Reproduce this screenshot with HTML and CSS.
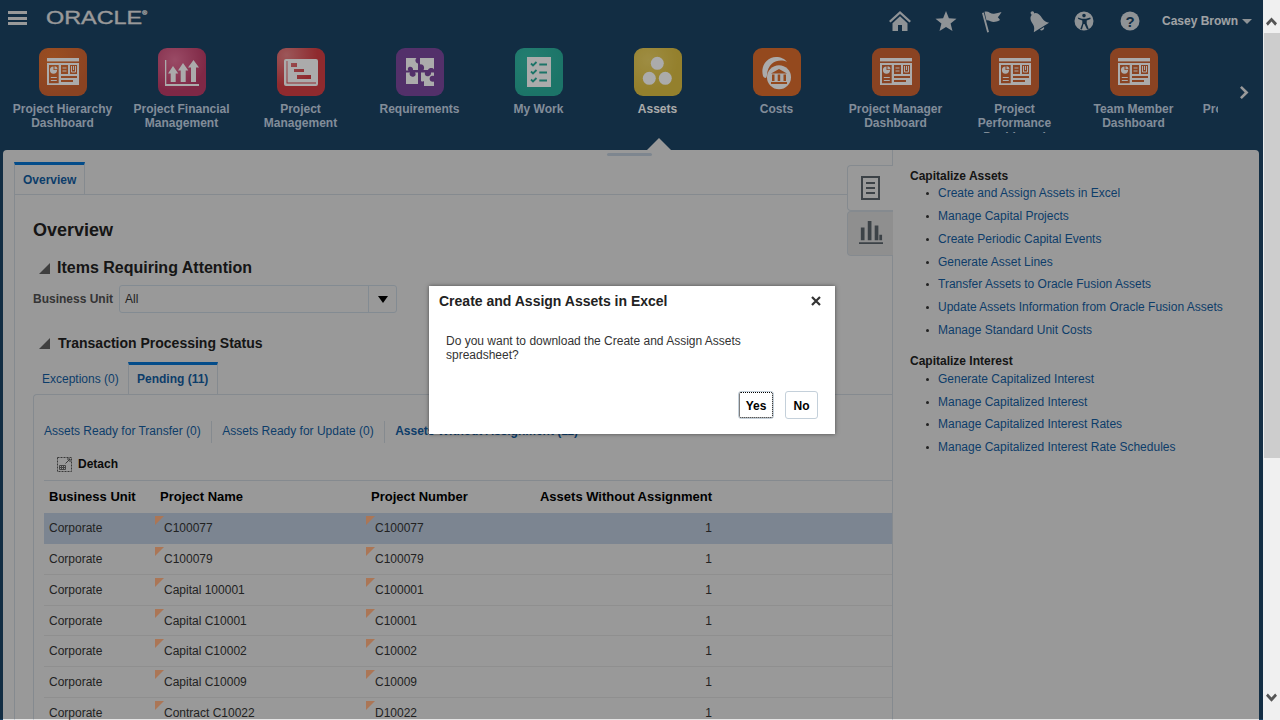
FILE: index.html
```html
<!DOCTYPE html>
<html lang="en">
<head>
  <meta charset="UTF-8">
  <title>Overview</title>
  <link rel="stylesheet" href="styles.css">
</head>
<body>

  <svg class="defs" width="0" height="0">
    <symbol id="i-dash" viewBox="0 0 48 48">
      <rect x="8" y="10" width="32" height="3.4" fill="#fff"/>
      <path fill="#fff" fill-rule="evenodd" d="M8 15H40V37H8Z M10 17V35.3H19.7V17Z M22 17V26H29V17Z M31 17V26H38V17Z M22 28V30H38V28Z M22 32V34H34V32Z"/>
      <path fill="#fff" d="M14.5 18.5a3.6 3.6 0 1 0 3.6 3.6H14.5Z M15.5 18.2v3h3a3.2 3.2 0 0 0-3-3Z"/>
      <path stroke="#fff" stroke-width="1" fill="none" d="M11.8 29.5H17.8 M11.8 32.5H17.8 M23.5 20H27.5 M23.5 23H27.5 M32.5 18V24H36.5V18 M34.5 18V22"/>
    </symbol>
  </svg>

  <div class="screen">
    <div class="page">

      <header class="topbar">
        <div class="hamburger"><span></span><span></span><span></span></div>
        <div class="logo">ORACLE<sup>®</sup></div>
        <div class="top-icons">
          <svg class="top-icon" viewBox="0 0 24 24"><path d="M12 2L1 12l1.6 1.6L12 5l9.4 8.6L23 12Z M4.5 14.2L12 7.2l7.5 7V22H14v-6h-4v6H4.5Z"/></svg>
          <svg class="top-icon" viewBox="0 0 24 24"><path d="M12 2l2.9 7.2 7.6.5-5.9 4.9 1.9 7.5L12 17.900l-6.500 4.200 1.900-7.500L1.500 9.700l7.600-.5Z"/></svg>
          <svg class="top-icon" viewBox="0 0 24 24"><path d="M2 4l1.800-.6L9 23l-1.800.5Z M4.500 2.800c4-1.500 6 2.500 9.500 2 2.500-.3 5-1 7.500-1.800-1.200 2-2 3.300-3.700 5.300 1 1 1.500 1.500 2.200 2.700-4 2.300-7 2.300-9.500 1.300-1.500-.6-3-1.300-4-.8Z"/></svg>
          <svg class="top-icon" viewBox="0 0 24 24"><g transform="rotate(-32 12 13)"><circle cx="12" cy="2.500" r="1.800"/><path d="M12 3.500C7 3.500 6.500 8 6.500 12c0 4-1.800 5.500-3.500 7.500H21c-1.700-2-3.500-3.500-3.500-7.500 0-4-.5-8.500-5.500-8.500Z M9.500 20.500a2.600 2.600 0 0 0 5 0Z"/></g></svg>
          <svg class="top-icon" viewBox="0 0 24 24"><path fill-rule="evenodd" d="M12 2.500a9.500 9.500 0 1 0 0 19 9.500 9.500 0 0 0 0-19Z M12 4.800a1.800 1.800 0 1 1 0 3.600 1.800 1.800 0 0 1 0-3.600Z M5.800 8.500L10 9.800h4l4.200-1.300.5 1.500-4 1.500v3l2 5.500-1.600.6L12.500 15h-1L9.900 20.600l-1.600-.6 2-5.500v-3l-4-1.500Z"/></svg>
          <svg class="top-icon" viewBox="0 0 24 24"><circle cx="12" cy="12" r="9.500"/><text class="help-mark" x="12" y="17.500" text-anchor="middle">?</text></svg>
        </div>
        <div class="user-name">Casey Brown</div>
        <div class="caret"></div>
      </header>

      <nav class="springboard">
        <div class="strip">
          <div class="tile">
            <div class="tile-icon ic-dash-first"><svg viewBox="0 0 48 48"><use href="#i-dash"/></svg></div>
            <div class="tile-label">Project Hierarchy Dashboard</div>
          </div>
          <div class="tile">
            <div class="tile-icon ic-finance">
              <svg viewBox="0 0 48 48" fill="#fff"><path d="M7 12H8.300V36H41V38H7Z M15 18l5.300 7.500H17.700V34H12.700V25.500H10Z M25 15l5.300 7.500H27.700V34H22.700V22.500H20Z M35.500 12l5.500 7.500H38V34H33V19.500H30Z"/></svg>
            </div>
            <div class="tile-label">Project Financial Management</div>
          </div>
          <div class="tile">
            <div class="tile-icon ic-pm">
              <svg viewBox="0 0 48 48" fill="#fff"><path fill-rule="evenodd" d="M9 11H39a2 2 0 0 1 2 2V36a2 2 0 0 1-2 2H9a2 2 0 0 1-2-2V13a2 2 0 0 1 2-2Z M9.500 13V35.500H39V34.500H10.500V13Z M14 15V19H20V15Z M17 21V24H27V21Z M20 27V31H34V27Z"/></svg>
            </div>
            <div class="tile-label">Project Management</div>
          </div>
          <div class="tile">
            <div class="tile-icon ic-req">
              <svg viewBox="0 0 48 48" fill="#fff"><path d="M10 10H20.500c-2 2 -1 5 1.500 5.500V22H17c.5-2.500-2-4-4-3-1.500.8-1.500 2.500-.5 3.500H10Z M24 10H38V21.500c-1-2-5-2-6 .5H27.500c2-3-1-6.500-3.500-5.500Z M10 24.500H14c-1.500 2.500 1.500 5 4 4 2-.8 2-3 1-4H22V36H10Z M25 24.500H29c-1 3 2 4.500 4 3.500 2-.8 2-2 2-3.500H38V28c-2.500-1-5 1-4.300 3.500.5 1.800 2.500 2.800 4.300 2V38H28V33c-1.500 1-3 .6-3-.5Z"/></svg>
            </div>
            <div class="tile-label">Requirements</div>
          </div>
          <div class="tile">
            <div class="tile-icon ic-work">
              <svg viewBox="0 0 48 48"><rect x="12" y="9" width="24" height="30" fill="#fff"/><path fill="none" stroke="#2aae9b" stroke-width="1.800" d="M16 15.500l2 2 3.500-3.500 M16 23.500l2 2 3.500-3.500 M16 31.500l2 2 3.500-3.500 M24.300 16.500H32 M24.300 24.500H32 M24.300 32.500H32"/></svg>
            </div>
            <div class="tile-label">My Work</div>
          </div>
          <div class="tile active">
            <div class="tile-icon ic-assets">
              <svg viewBox="0 0 48 48" fill="#fff"><circle cx="23.300" cy="15.300" r="6.500"/><circle cx="15.300" cy="30.300" r="6.500"/><circle cx="31.300" cy="30.300" r="6.500"/></svg>
            </div>
            <div class="tile-label">Assets</div>
          </div>
          <div class="tile">
            <div class="tile-icon ic-costs">
              <svg viewBox="0 0 48 48"><path fill="#fff" d="M10 28C7 17 15 9 23 9c5 0 9 2 11 5-7-3.500-19-1-20 13-.2 1.500-.5 2-1 3-1.500 0-2.500-1-3-2Z"/><circle cx="26" cy="29.300" r="12" fill="#fff"/><path fill="#dd6d2e" d="M26 21l8 4.500H18Z M19 26.500h2.500V33H19Z M24.700 26.500h2.500V33h-2.500Z M30.500 26.500H33V33h-2.500Z M18 34h16v2H18Z"/></svg>
            </div>
            <div class="tile-label">Costs</div>
          </div>
          <div class="tile">
            <div class="tile-icon ic-dash"><svg viewBox="0 0 48 48"><use href="#i-dash"/></svg></div>
            <div class="tile-label">Project Manager Dashboard</div>
          </div>
          <div class="tile">
            <div class="tile-icon ic-dash"><svg viewBox="0 0 48 48"><use href="#i-dash"/></svg></div>
            <div class="tile-label">Project Performance Dashboard</div>
          </div>
          <div class="tile">
            <div class="tile-icon ic-dash"><svg viewBox="0 0 48 48"><use href="#i-dash"/></svg></div>
            <div class="tile-label">Team Member Dashboard</div>
          </div>
          <div class="tile">
            <div class="tile-icon ic-dash"><svg viewBox="0 0 48 48"><use href="#i-dash"/></svg></div>
            <div class="tile-label">Project Hierarchy Dashboard</div>
          </div>
        </div>
        <svg class="strip-next" viewBox="0 0 10 13"><path d="M0 1.800L1.800 0 8.500 6.500 1.800 13 0 11.200 4.700 6.500Z"/></svg>
      </nav>

      <main class="panel">
        <div class="panel-pointer"></div>
        <div class="panel-handle"></div>

        <section class="work-area">
          <div class="tab-row">
            <div class="tab-main">Overview</div>
          </div>
          <div class="frame">
            <h1 class="title">Overview</h1>
            <h2 class="section-head"><span class="disclose"></span>Items Requiring Attention</h2>
            <div class="form-row">
              <label class="field-label">Business Unit</label>
              <div class="select">
                <span class="select-value">All</span>
                <span class="select-btn"><span class="select-arrow"></span></span>
              </div>
            </div>
            <h3 class="sub-head"><span class="disclose"></span>Transaction Processing Status</h3>

            <div class="subtabs">
              <div class="subtab">Exceptions (0)</div>
              <div class="subtab current">Pending (11)</div>
            </div>

            <div class="subpanel">
              <div class="filters">
                <a class="filter">Assets Ready for Transfer (0)</a>
                <a class="filter">Assets Ready for Update (0)</a>
                <a class="filter selected">Assets Without Assignment (11)</a>
              </div>
              <div class="toolbar">
                <svg class="detach-icon" viewBox="0 0 15 15">
                  <path fill="none" stroke="#555" stroke-dasharray="2 1" d="M.5.500h14v14H.500Z"/>
                  <path fill="none" stroke="#555" d="M8.500 6.500L13 2 M10 2h3v3"/>
                  <path fill="none" stroke="#666" d="M2.500 8.500h6v4h-6Z M2.500 10.500h6 M4.500 8.500v4 M6.500 8.500v4"/>
                </svg>
                <span>Detach</span>
              </div>
              <div class="grid-row grid-head">
                <div class="cell">Business Unit</div>
                <div class="cell">Project Name</div>
                <div class="cell">Project Number</div>
                <div class="cell num">Assets Without Assignment</div>
              </div>
              <div class="grid-row picked">
                <div class="cell">Corporate</div>
                <div class="cell linked">C100077</div>
                <div class="cell linked">C100077</div>
                <div class="cell num">1</div>
              </div>
              <div class="grid-row">
                <div class="cell">Corporate</div>
                <div class="cell linked">C100079</div>
                <div class="cell linked">C100079</div>
                <div class="cell num">1</div>
              </div>
              <div class="grid-row">
                <div class="cell">Corporate</div>
                <div class="cell linked">Capital 100001</div>
                <div class="cell linked">C100001</div>
                <div class="cell num">1</div>
              </div>
              <div class="grid-row">
                <div class="cell">Corporate</div>
                <div class="cell linked">Capital C10001</div>
                <div class="cell linked">C10001</div>
                <div class="cell num">1</div>
              </div>
              <div class="grid-row">
                <div class="cell">Corporate</div>
                <div class="cell linked">Capital C10002</div>
                <div class="cell linked">C10002</div>
                <div class="cell num">1</div>
              </div>
              <div class="grid-row">
                <div class="cell">Corporate</div>
                <div class="cell linked">Capital C10009</div>
                <div class="cell linked">C10009</div>
                <div class="cell num">1</div>
              </div>
              <div class="grid-row">
                <div class="cell">Corporate</div>
                <div class="cell linked">Contract C10022</div>
                <div class="cell linked">D10022</div>
                <div class="cell num">1</div>
              </div>
            </div>
          </div>
        </section>

        <div class="side-tabs">
          <div class="side-tab open">
            <svg viewBox="0 0 24 26" class="side-icon"><path fill="none" stroke="#5a636b" stroke-width="2" d="M3 2H20V24H3Z M7 8H16 M7 13H16 M7 18H16"/></svg>
          </div>
          <div class="side-tab">
            <svg viewBox="0 0 26 26" class="side-icon chart"><path fill="#5a636b" d="M2 8H6V22H2Z M9.500 1H13.500V22H9.500Z M17 6H21V22H17Z M22 16H25V22H22Z M0 24H26V26H0Z"/></svg>
          </div>
        </div>

        <aside class="tasks">
          <h4 class="task-head">Capitalize Assets</h4>
          <ul class="task-list">
            <li><a>Create and Assign Assets in Excel</a></li>
            <li><a>Manage Capital Projects</a></li>
            <li><a>Create Periodic Capital Events</a></li>
            <li><a>Generate Asset Lines</a></li>
            <li><a>Transfer Assets to Oracle Fusion Assets</a></li>
            <li><a>Update Assets Information from Oracle Fusion Assets</a></li>
            <li><a>Manage Standard Unit Costs</a></li>
          </ul>
          <h4 class="task-head second">Capitalize Interest</h4>
          <ul class="task-list tight">
            <li><a>Generate Capitalized Interest</a></li>
            <li><a>Manage Capitalized Interest</a></li>
            <li><a>Manage Capitalized Interest Rates</a></li>
            <li><a>Manage Capitalized Interest Rate Schedules</a></li>
          </ul>
        </aside>
      </main>

      <div class="overlay"></div>

      <div class="dialog">
        <div class="dialog-head">
          <span class="dialog-title">Create and Assign Assets in Excel</span>
          <svg class="dialog-close" viewBox="0 0 10 10"><path fill="none" stroke="#333" stroke-width="2.200" d="M1 1L9 9 M9 1L1 9"/></svg>
        </div>
        <p class="dialog-body">Do you want to download the Create and Assign Assets spreadsheet?</p>
        <div class="dialog-foot">
          <button class="btn focus">Yes</button>
          <button class="btn">No</button>
        </div>
      </div>
    </div>

    <div class="scrollbar">
      <div class="scroll-btn">
        <svg viewBox="0 0 12 9"><path d="M0 6.500L6 0l6 6.500L10 9 6 4.500 2 9Z"/></svg>
      </div>
      <div class="scroll-thumb"></div>
      <div class="scroll-track">
        <svg viewBox="0 0 12 9"><path d="M0 2.500L6 9l6-6.500L10 0 6 4.500 2 0Z"/></svg>
      </div>
    </div>
  </div>

</body>
</html>
```

FILE: styles.css
```css
* {
  box-sizing: border-box;
}
html, body {
  margin: 0;
  padding: 0;
  height: 720px;
  overflow: hidden;
}
body {
  font-family: "Liberation Sans", Arial, sans-serif;
  font-size: 12px;
  color: #333;
  background: #f0f0f0;
}
a {
  color: #145c9e;
}
.defs {
  position: absolute;
}
.screen {
  display: flex;
  height: 720px;
}
.page {
  position: relative;
  width: 1263px;
  height: 720px;
  background: #1b4365;
  overflow: hidden;
}

/* top bar */
.topbar {
  display: flex;
  align-items: center;
  height: 48px;
  padding: 0 11px 6px 8px;
}
.hamburger {
  display: flex;
  flex-direction: column;
  gap: 2.5px;
  width: 19px;
  margin-bottom: 6px;
}
.hamburger span {
  height: 3px;
  background: #e5e5e5;
}
.logo {
  width: 100px;
  margin-left: 19px;
  margin-bottom: 7px;
  font-size: 18px;
  line-height: 20px;
  color: #e5e5e5;
  transform: scaleX(1.3);
  transform-origin: left center;
  -webkit-text-stroke: 0.3px #e5e5e5;
}
.logo sup {
  font-size: 5px;
  vertical-align: 9px;
  line-height: 0;
}
.top-icons {
  display: flex;
  gap: 22px;
  margin-left: auto;
}
.top-icon {
  width: 24px;
  height: 24px;
  fill: #d5dbe0;
}
.help-mark {
  font-size: 15px;
  font-weight: bold;
  fill: #1b4365;
}
.user-name {
  margin-left: 20px;
  font-weight: bold;
  color: #eef2f6;
}
.caret {
  width: 0;
  height: 0;
  margin-left: 4px;
  border-left: 5px solid transparent;
  border-right: 5px solid transparent;
  border-top: 5px solid #d5dbe0;
}

/* springboard */
.springboard {
  display: flex;
  height: 102px;
  padding-left: 3px;
}
.strip {
  display: flex;
  flex: none;
  width: 1215px;
  overflow: hidden;
}
.tile {
  flex: none;
  display: flex;
  flex-direction: column;
  align-items: center;
  width: 119px;
}
.tile-icon {
  width: 48px;
  height: 48px;
  border-radius: 9px;
}
.tile-icon svg {
  display: block;
  width: 48px;
  height: 48px;
}
.tile-label {
  width: 105px;
  max-height: 31px;
  margin-top: 6px;
  overflow: hidden;
  font-weight: bold;
  line-height: 14px;
  text-align: center;
  color: #c2d2e3;
}
.tile.active .tile-label {
  color: #fff;
}
.ic-dash-first { background: radial-gradient(circle at 30% 20%, #e67532, #ce6434 75%); }
.ic-dash { background: #ce6434; }
.ic-finance { background: radial-gradient(circle at 35% 25%, #e67098, #be3d69 65%); }
.ic-pm { background: radial-gradient(circle at 20% 15%, #e88285, #d53f45 55%); }
.ic-req { background: #7d489e; }
.ic-work { background: radial-gradient(circle at 30% 25%, #36bca8, #2aae9b 70%); }
.ic-assets { background: radial-gradient(circle at 30% 25%, #ecd264, #ddbf43 60%); }
.ic-costs { background: #dd6d2e; }
.strip-next {
  width: 10px;
  height: 13px;
  margin: 38px 0 0 22px;
  fill: #e5e5e5;
}

/* main panel */
.panel {
  position: relative;
  display: flex;
  width: 1256px;
  height: 570px;
  margin-left: 3px;
  background: #e5e5e5;
  border-radius: 4px 4px 0 0;
}
.panel-pointer {
  position: absolute;
  left: 644px;
  top: -12px;
  width: 0;
  height: 0;
  border-left: 12px solid transparent;
  border-right: 12px solid transparent;
  border-bottom: 12px solid #e5e5e5;
}
.panel-handle {
  position: absolute;
  left: 604px;
  top: 3px;
  width: 45px;
  height: 3px;
  border-radius: 2px;
  background: #bcc8d6;
}
.work-area {
  flex: none;
  width: 889px;
  padding: 12px 0 0 11px;
  overflow: hidden;
}
.tab-row {
  height: 32px;
}
.tab-main {
  width: 71px;
  height: 32px;
  border: 1px solid #c6ced6;
  border-top: 3px solid #0572ce;
  border-bottom: none;
  padding: 8px 0 0 8px;
  font-weight: bold;
  line-height: 14px;
  color: #145c9e;
}
.frame {
  min-height: 526px;
  border-left: 1px solid #c6ced6;
  border-top: 1px solid #c6ced6;
  padding: 24px 0 0 18px;
}
.title {
  margin: 0;
  font-size: 18px;
  line-height: 22px;
  color: #222;
}
.section-head {
  display: flex;
  align-items: center;
  margin: 17px 0 0;
  font-size: 16px;
  line-height: 20px;
  color: #222;
}
.disclose {
  width: 0;
  height: 0;
  margin: 0 7px 0 6px;
  border-left: 11px solid transparent;
  border-bottom: 11px solid #5f5f5f;
}
.form-row {
  display: flex;
  align-items: center;
  margin-top: 7px;
}
.field-label {
  width: 86px;
  font-weight: bold;
  color: #4f4f4f;
}
.select {
  display: flex;
  width: 278px;
  height: 28px;
  border: 1px solid #c4d0da;
  border-radius: 3px;
}
.select-value {
  flex: 1;
  padding-left: 5px;
  line-height: 26px;
}
.select-btn {
  display: flex;
  align-items: center;
  justify-content: center;
  width: 28px;
  border-left: 1px solid #c4d0da;
}
.select-arrow {
  width: 0;
  height: 0;
  border-left: 5px solid transparent;
  border-right: 5px solid transparent;
  border-top: 7px solid #000;
}
.sub-head {
  display: flex;
  align-items: center;
  margin: 21px 0 0;
  font-size: 14px;
  line-height: 18px;
  color: #222;
}
.sub-head .disclose {
  margin-right: 8px;
}
.subtabs {
  display: flex;
  margin-top: 10px;
  height: 32px;
}
.subtab {
  width: 95px;
  padding: 10px 0 0 9px;
  line-height: 14px;
  color: #145c9e;
}
.subtab.current {
  width: 90px;
  border: 1px solid #c6ced6;
  border-top: 3px solid #0572ce;
  border-bottom: none;
  padding: 7px 0 0 8px;
  font-weight: bold;
}
.subpanel {
  min-height: 340px;
  border-left: 1px solid #c6ced6;
  border-top: 1px solid #c6ced6;
  border-radius: 4px 0 0 0;
  padding: 26px 0 0 10px;
}
.filters {
  display: flex;
  height: 22px;
}
.filter {
  padding-right: 10px;
  margin-right: 10.5px;
  border-right: 1px solid #c6ced6;
  line-height: 20px;
}
.filter.selected {
  border: none;
  font-weight: bold;
}
.toolbar {
  display: flex;
  align-items: center;
  height: 22px;
  margin-top: 10px;
  margin-bottom: 5px;
  padding-left: 13px;
  font-weight: bold;
  color: #111;
}
.detach-icon {
  width: 15px;
  height: 15px;
  margin-right: 6px;
}
.grid-row {
  display: grid;
  grid-template-columns: 111px 211px 168px 183px 1fr;
  height: 30.85px;
  border-bottom: 1px solid #d6d6d6;
  line-height: 30px;
  color: #333;
}
.grid-head {
  height: 33px;
  border-top: 1px solid #c6ced6;
  border-bottom: none;
  padding-top: 1px;
  font-size: 13px;
  font-weight: bold;
  color: #000;
}
.grid-row.picked {
  background: #b9c7d8;
  border-bottom-color: #b9c7d8;
}
.cell {
  position: relative;
  padding: 0 5px;
  white-space: nowrap;
}
.cell.num {
  text-align: right;
}
.cell.linked {
  padding-left: 9px;
}
.cell.linked::before {
  content: "";
  position: absolute;
  left: 0;
  top: 3px;
  border-top: 9px solid #ffb080;
  border-right: 9px solid transparent;
}

/* side tabs and task pane */
.side-tabs {
  position: absolute;
  left: 844px;
  top: 15px;
  width: 46px;
}
.side-tab {
  display: flex;
  align-items: center;
  justify-content: center;
  height: 45px;
  border: 1px solid #c6ced6;
  border-right: none;
  border-radius: 4px 0 0 4px;
  background: #d6d6d6;
}
.side-tab.open {
  height: 46px;
  background: #e5e5e5;
}
.side-icon {
  width: 24px;
  height: 26px;
}
.side-icon.chart {
  margin-bottom: 3px;
}
.tasks {
  flex: 1;
  padding: 19px 0 0 17px;
  border-left: 1px solid #c6ced6;
}
.task-head {
  margin: 0;
  height: 13px;
  font-size: 12px;
  line-height: 15px;
  color: #222;
}
.task-head.second {
  height: 14px;
  margin-top: 12.35px;
  line-height: 14px;
}
.task-list {
  margin: 0;
  padding: 0 0 0 28px;
  list-style: none;
}
.task-list li {
  position: relative;
  line-height: 22.85px;
  white-space: nowrap;
}
.task-list.tight li {
  line-height: 22.5px;
}
.task-list li::before {
  content: "";
  position: absolute;
  left: -12px;
  top: 10px;
  width: 3px;
  height: 3px;
  border-radius: 50%;
  background: #333;
}

/* modal */
.overlay {
  position: absolute;
  left: 0;
  top: 0;
  width: 100%;
  height: 719px;
  background: rgba(0, 0, 0, 0.33);
}
.dialog {
  position: absolute;
  left: 429px;
  top: 286px;
  display: flex;
  flex-direction: column;
  width: 406px;
  height: 148px;
  background: #fff;
  box-shadow: 0 0 4px rgba(0, 0, 0, 0.5);
}
.dialog-head {
  display: flex;
  justify-content: space-between;
  align-items: center;
  height: 30px;
  padding: 0 14px 0 10px;
}
.dialog-title {
  font-size: 14px;
  font-weight: bold;
  color: #222;
}
.dialog-close {
  width: 10px;
  height: 10px;
}
.dialog-body {
  max-width: 340px;
  margin: 18px 0 0;
  padding: 0 17px;
  line-height: 14px;
}
.dialog-foot {
  display: flex;
  justify-content: flex-end;
  gap: 11px;
  margin-top: auto;
  padding: 0 17px 15px;
}
.btn {
  height: 28px;
  min-width: 33px;
  padding: 1px 6px 0;
  border: 1px solid #c4d0da;
  border-radius: 3px;
  background: #fff;
  font-family: inherit;
  font-size: 12px;
  font-weight: bold;
  color: #000;
}
.btn.focus {
  width: 36px;
  outline: 1px dotted #000;
  outline-offset: -2px;
}

/* fake browser scrollbar */
.scrollbar {
  display: flex;
  flex-direction: column;
  width: 17px;
  height: 720px;
  background: #f0f0f0;
}
.scrollbar svg {
  display: block;
  width: 11px;
  height: 9px;
  fill: #555;
}
.scroll-btn {
  height: 33px;
  padding: 17px 0 0 3px;
}
.scroll-thumb {
  height: 425px;
  margin-left: 1px;
  background: #cdcdcd;
}
.scroll-track {
  flex: 1;
  padding: 235px 0 0 3px;
}
```
